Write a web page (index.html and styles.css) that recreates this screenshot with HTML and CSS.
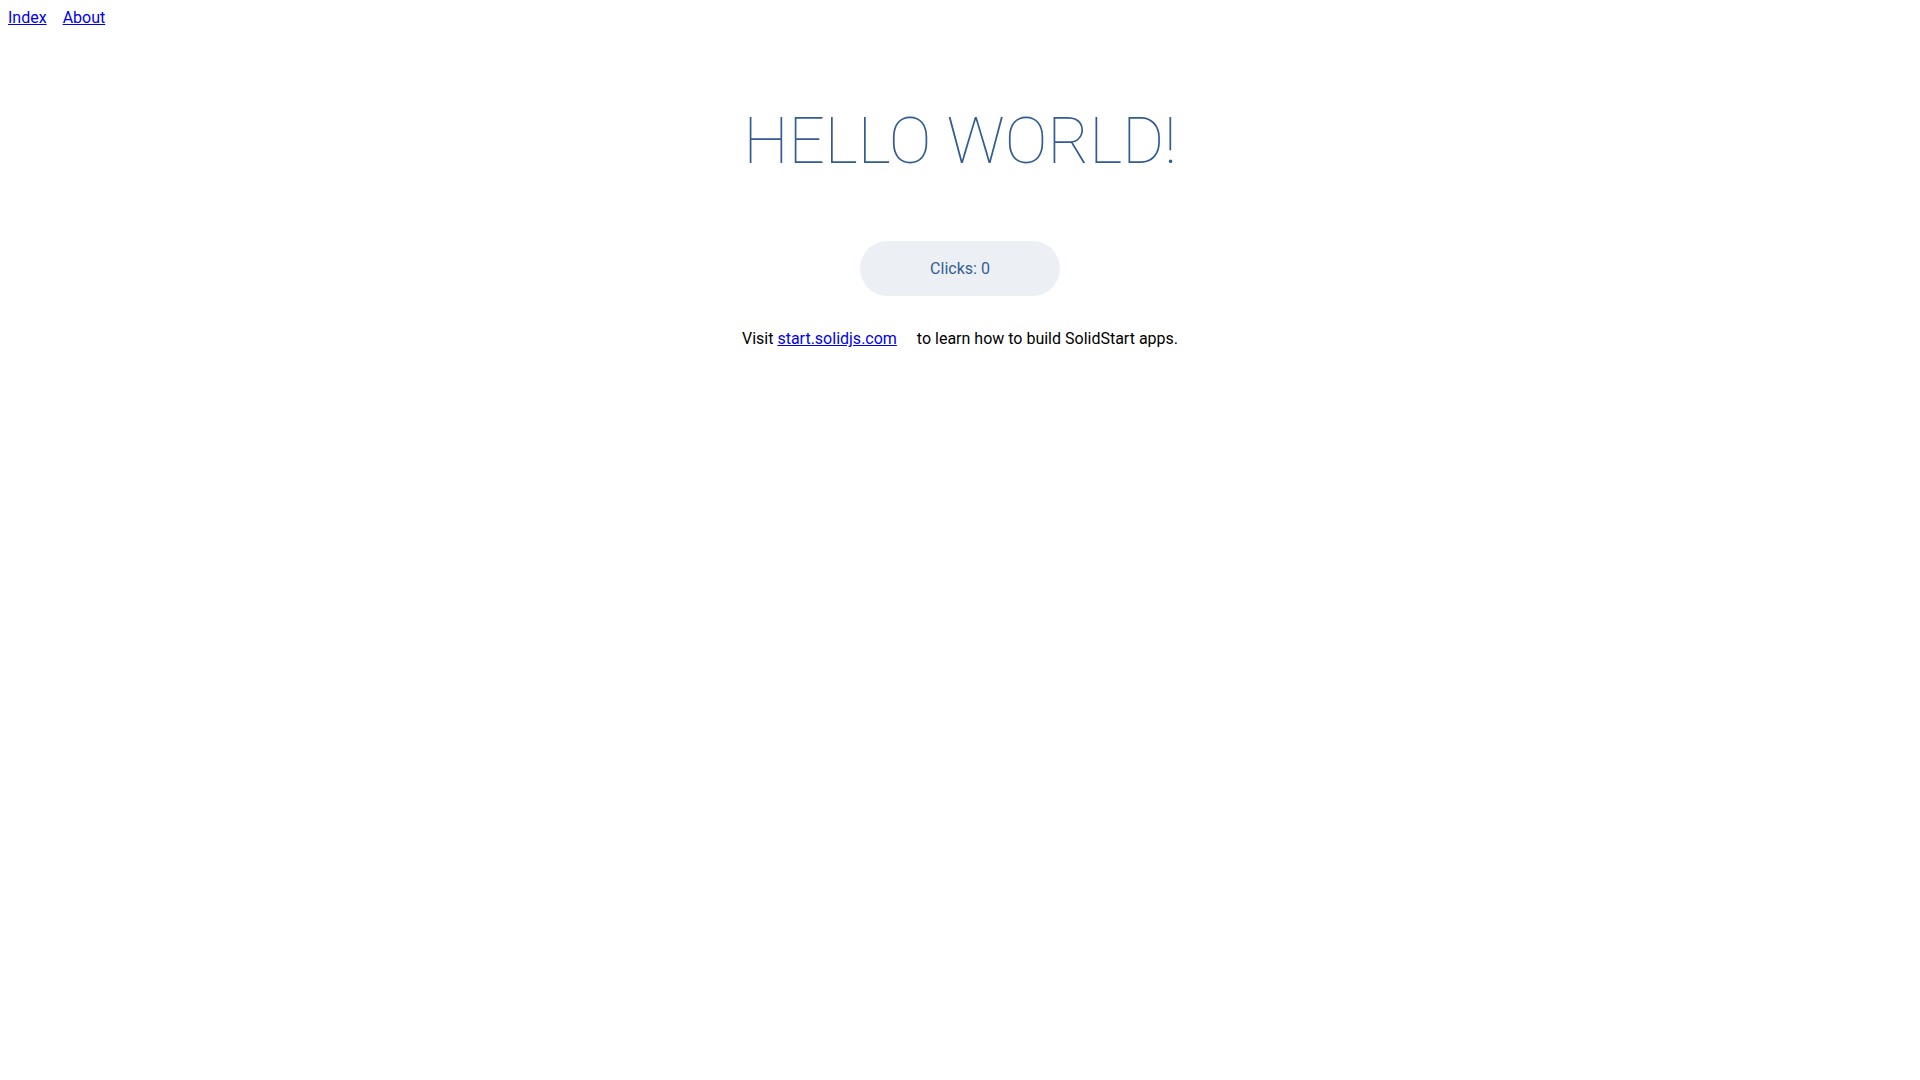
FILE: index.html
```html
<!DOCTYPE html>
<html lang="en">
<head>
<meta charset="utf-8">
<title>SolidStart</title>
<link rel="stylesheet" href="styles.css">
</head>
<body>
<nav><a href="/">Index</a><a href="/about">About</a></nav>
<main>
  <h1>Hello world!</h1>
  <button class="increment">Clicks: 0</button>
  <p>Visit <a href="https://start.solidjs.com" target="_blank">start.solidjs.com</a> to learn how to build SolidStart apps.</p>
</main>
</body>
</html>
```

FILE: styles.css
```css
body {
  font-family: Roboto, "Open Sans", "Liberation Sans", sans-serif;
  font-size: 16px;
}

a {
  margin-right: 1rem;
}

main {
  text-align: center;
  padding: 1em;
  margin: 0 auto;
}

h1 {
  color: #335d92;
  text-transform: uppercase;
  font-size: 4rem;
  font-weight: 100;
  line-height: 1.1;
  margin: 4rem auto;
  max-width: none;
}

p {
  max-width: none;
  margin: 2rem auto;
  line-height: 1.35;
}

.increment {
  font-family: inherit;
  font-size: inherit;
  padding: 1em 2em;
  color: #335d92;
  background-color: rgba(68, 107, 158, 0.1);
  border-radius: 2em;
  border: 2px solid rgba(68, 107, 158, 0);
  outline: none;
  width: 200px;
  font-variant-numeric: tabular-nums;
  cursor: pointer;
}
```
